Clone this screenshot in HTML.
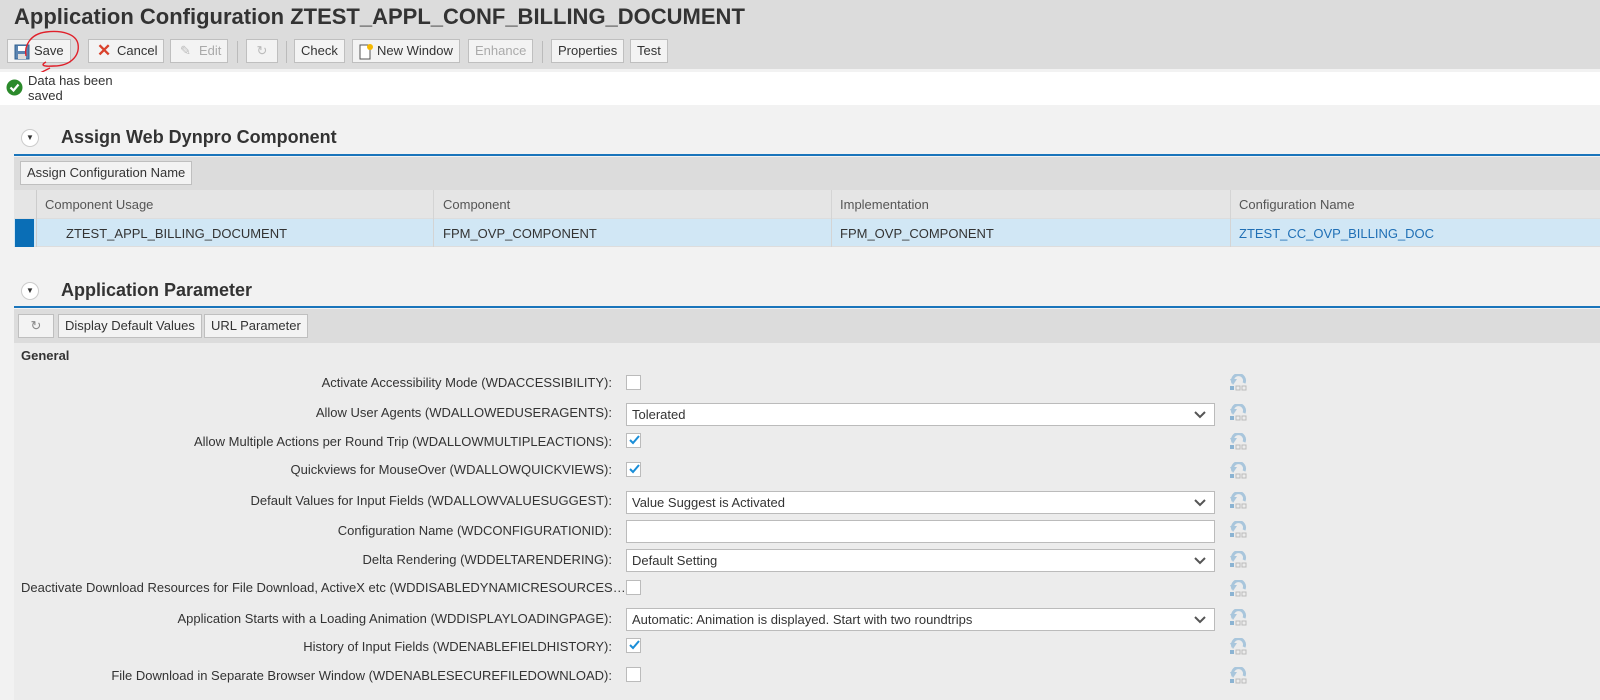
<!DOCTYPE html><html><head><style>
*{box-sizing:border-box;margin:0;padding:0}
body{width:1600px;height:700px;overflow:hidden;background:#f2f2f2;font-family:"Liberation Sans",Arial,sans-serif;font-size:13px;color:#333;position:relative}
.a{position:absolute}
.btn{position:absolute;top:39px;height:24px;border:1px solid #bfbfbf;background:#f3f3f3;font-size:13px;line-height:22px;padding:0 6px;color:#333;white-space:nowrap}
.dis{color:#aaa}
.sec{position:absolute;left:14px;right:0;height:2px;background:#1a75bb}
.tg{position:absolute;width:18px;height:18px;border-radius:50%;background:#fff;border:1px solid #ccc;font-size:8px;text-align:center;line-height:16px;color:#333}
.h2{position:absolute;left:61px;font-size:18px;font-weight:bold;color:#333}
.lbl{position:absolute;right:988px;font-size:13px;white-space:nowrap}
.cb{position:absolute;left:626px;width:15px;height:15px;background:#fff;border:1px solid #bbb}
.cb svg{position:absolute;left:1px;top:0}
.dd{position:absolute;left:626px;width:589px;height:23px;background:#fff;border:1px solid #bbb;padding-left:5px;line-height:21px}
.dd svg{position:absolute;right:8px;top:7px}
.rv{position:absolute;left:1229px}
</style></head><body>
<div class="a" style="left:0;top:0;width:1600px;height:69px;background:#dcdcdc"></div>
<div class="a" style="left:14px;top:4px;font-size:22px;font-weight:bold;color:#333">Application Configuration ZTEST_APPL_CONF_BILLING_DOCUMENT</div>
<div class="btn" style="left:7px;padding-left:26px"><svg class="a" style="left:6px;top:4px" width="16" height="16"><rect x="1" y="1" width="14" height="14" fill="#5b84b1" stroke="#2f5f8f"/><rect x="4" y="2" width="8" height="5" fill="#fff"/><rect x="4" y="10" width="8" height="5" fill="#ddd"/></svg>Save</div>
<svg class="a" style="left:20px;top:26px" width="70" height="50"><path d="M6 30 C4 20,10 8,26 6 C42 4,56 8,58 18 C60 30,50 40,34 40 C20 41,22 38,26 36" fill="none" stroke="#e0202a" stroke-width="1.4"/><path d="M30 42 L14 50" stroke="#e0202a" stroke-width="1.4"/></svg>
<div class="btn" style="left:88px;padding-left:28px"><span class="a" style="left:8px;top:0;color:#d9412b;font-weight:bold;font-size:17px">✕</span>Cancel</div>
<div class="btn dis" style="left:170px;padding-left:28px"><span class="a" style="left:9px;top:0;color:#bbb">✎</span>Edit</div>
<div class="a" style="left:237px;top:41px;width:1px;height:22px;background:#bbb"></div>
<div class="btn dis" style="left:246px;width:32px;text-align:center;color:#bbb">↻</div>
<div class="a" style="left:286px;top:41px;width:1px;height:22px;background:#bbb"></div>
<div class="btn" style="left:294px">Check</div>
<div class="btn" style="left:352px;padding-left:24px"><svg class="a" style="left:6px;top:3px" width="14" height="17"><rect x="1" y="2" width="10" height="14" fill="#fff" stroke="#555"/><circle cx="11" cy="4" r="3" fill="#f5b800"/></svg>New Window</div>
<div class="btn dis" style="left:468px">Enhance</div>
<div class="a" style="left:542px;top:41px;width:1px;height:22px;background:#bbb"></div>
<div class="btn" style="left:551px">Properties</div>
<div class="btn" style="left:630px">Test</div>
<div class="a" style="left:0;top:72px;width:1600px;height:33px;background:#fff"></div>
<svg class="a" style="left:6px;top:79px" width="17" height="17"><circle cx="8.5" cy="8.5" r="8" fill="#2b8a2b"/><path d="M4.5 8.5l3 3 5-6" stroke="#fff" stroke-width="2.2" fill="none"/></svg>
<div class="a" style="left:28px;top:73px;line-height:15px">Data has been<br>saved</div>
<div class="a" style="left:0;top:105px;width:1600px;height:595px;background:#f2f2f2"></div>
<div class="tg" style="left:21px;top:129px">▼</div>
<div class="h2" style="top:127px">Assign Web Dynpro Component</div>
<div class="sec" style="top:154px"></div>
<div class="a" style="left:14px;top:157px;width:1586px;height:33px;background:#dcdcdc"></div>
<div class="btn" style="left:20px;top:161px">Assign Configuration Name</div>
<div class="a" style="left:14px;top:190px;width:1586px;height:29px;background:#e5e5e5;border-bottom:1px solid #ddd"></div>
<div class="a" style="left:14px;top:219px;width:1586px;height:28px;background:#d1e7f5;border-bottom:1px solid #ddd"></div>
<div class="a" style="left:15px;top:219px;width:19px;height:28px;background:#0a6eb6"></div>
<div class="a" style="left:36px;top:190px;width:1px;height:57px;background:#ccc"></div>
<div class="a" style="left:433px;top:190px;width:1px;height:57px;background:#d4d4d4"></div>
<div class="a" style="left:831px;top:190px;width:1px;height:57px;background:#d4d4d4"></div>
<div class="a" style="left:1230px;top:190px;width:1px;height:57px;background:#d4d4d4"></div>
<div class="a" style="left:45px;top:197px;color:#555">Component Usage</div>
<div class="a" style="left:443px;top:197px;color:#555">Component</div>
<div class="a" style="left:840px;top:197px;color:#555">Implementation</div>
<div class="a" style="left:1239px;top:197px;color:#555">Configuration Name</div>
<div class="a" style="left:66px;top:226px">ZTEST_APPL_BILLING_DOCUMENT</div>
<div class="a" style="left:443px;top:226px">FPM_OVP_COMPONENT</div>
<div class="a" style="left:840px;top:226px">FPM_OVP_COMPONENT</div>
<div class="a" style="left:1239px;top:226px;color:#1f6fb5">ZTEST_CC_OVP_BILLING_DOC</div>
<div class="tg" style="left:21px;top:282px">▼</div>
<div class="h2" style="top:280px">Application Parameter</div>
<div class="sec" style="top:306px"></div>
<div class="a" style="left:14px;top:309px;width:1586px;height:391px;background:#ececec"></div>
<div class="a" style="left:14px;top:309px;width:1586px;height:34px;background:#dcdcdc"></div>
<div class="btn" style="left:18px;top:314px;width:36px;text-align:center;color:#888">↻</div>
<div class="btn" style="left:58px;top:314px">Display Default Values</div>
<div class="btn" style="left:204px;top:314px">URL Parameter</div>
<div class="a" style="left:21px;top:348px;font-weight:bold">General</div>

<div class="lbl" style="top:375px">Activate Accessibility Mode (WDACCESSIBILITY):</div><div class="cb" style="top:375px"></div>
<div class="lbl" style="top:405px">Allow User Agents (WDALLOWEDUSERAGENTS):</div><div class="dd" style="top:403px">Tolerated<svg width="12" height="8"><path d="M1 1l5 5 5-5" stroke="#555" stroke-width="2" fill="none"/></svg></div>
<div class="lbl" style="top:434px">Allow Multiple Actions per Round Trip (WDALLOWMULTIPLEACTIONS):</div><div class="cb" style="top:433px"><svg width="12" height="12"><path d="M2 6l3 3 6-7" stroke="#1a8ed8" stroke-width="2" fill="none"/></svg></div>
<div class="lbl" style="top:462px">Quickviews for MouseOver (WDALLOWQUICKVIEWS):</div><div class="cb" style="top:462px"><svg width="12" height="12"><path d="M2 6l3 3 6-7" stroke="#1a8ed8" stroke-width="2" fill="none"/></svg></div>
<div class="lbl" style="top:493px">Default Values for Input Fields (WDALLOWVALUESUGGEST):</div><div class="dd" style="top:491px">Value Suggest is Activated<svg width="12" height="8"><path d="M1 1l5 5 5-5" stroke="#555" stroke-width="2" fill="none"/></svg></div>
<div class="lbl" style="top:523px">Configuration Name (WDCONFIGURATIONID):</div><div class="dd" style="top:520px"></div>
<div class="lbl" style="top:552px">Delta Rendering (WDDELTARENDERING):</div><div class="dd" style="top:549px">Default Setting<svg width="12" height="8"><path d="M1 1l5 5 5-5" stroke="#555" stroke-width="2" fill="none"/></svg></div>
<div class="a" style="left:21px;top:580px;white-space:nowrap">Deactivate Download Resources for File Download, ActiveX etc (WDDISABLEDYNAMICRESOURCES…</div><div class="cb" style="top:580px"></div>
<div class="lbl" style="top:611px">Application Starts with a Loading Animation (WDDISPLAYLOADINGPAGE):</div><div class="dd" style="top:608px">Automatic: Animation is displayed. Start with two roundtrips<svg width="12" height="8"><path d="M1 1l5 5 5-5" stroke="#555" stroke-width="2" fill="none"/></svg></div>
<div class="lbl" style="top:639px">History of Input Fields (WDENABLEFIELDHISTORY):</div><div class="cb" style="top:638px"><svg width="12" height="12"><path d="M2 6l3 3 6-7" stroke="#1a8ed8" stroke-width="2" fill="none"/></svg></div>
<div class="lbl" style="top:668px">File Download in Separate Browser Window (WDENABLESECUREFILEDOWNLOAD):</div><div class="cb" style="top:667px"></div>

<svg width="0" height="0" style="position:absolute"><defs><g id="rv"><path d="M4 9 A6 6 0 1 1 15 9" fill="none" stroke="#a9c6dc" stroke-width="3"/><path d="M1 5 L8 5 L4 11Z" fill="#a9c6dc"/><rect x="1" y="12" width="4" height="4" fill="#8bb3d2"/><rect x="7" y="12" width="4" height="4" fill="none" stroke="#bbb"/><rect x="13" y="12" width="4" height="4" fill="none" stroke="#bbb"/></g></defs></svg>
<svg class="rv" style="top:374px" width="18" height="18"><use href="#rv"/></svg>
<svg class="rv" style="top:404px" width="18" height="18"><use href="#rv"/></svg>
<svg class="rv" style="top:433px" width="18" height="18"><use href="#rv"/></svg>
<svg class="rv" style="top:462px" width="18" height="18"><use href="#rv"/></svg>
<svg class="rv" style="top:492px" width="18" height="18"><use href="#rv"/></svg>
<svg class="rv" style="top:521px" width="18" height="18"><use href="#rv"/></svg>
<svg class="rv" style="top:551px" width="18" height="18"><use href="#rv"/></svg>
<svg class="rv" style="top:580px" width="18" height="18"><use href="#rv"/></svg>
<svg class="rv" style="top:609px" width="18" height="18"><use href="#rv"/></svg>
<svg class="rv" style="top:638px" width="18" height="18"><use href="#rv"/></svg>
<svg class="rv" style="top:667px" width="18" height="18"><use href="#rv"/></svg>
</body></html>
